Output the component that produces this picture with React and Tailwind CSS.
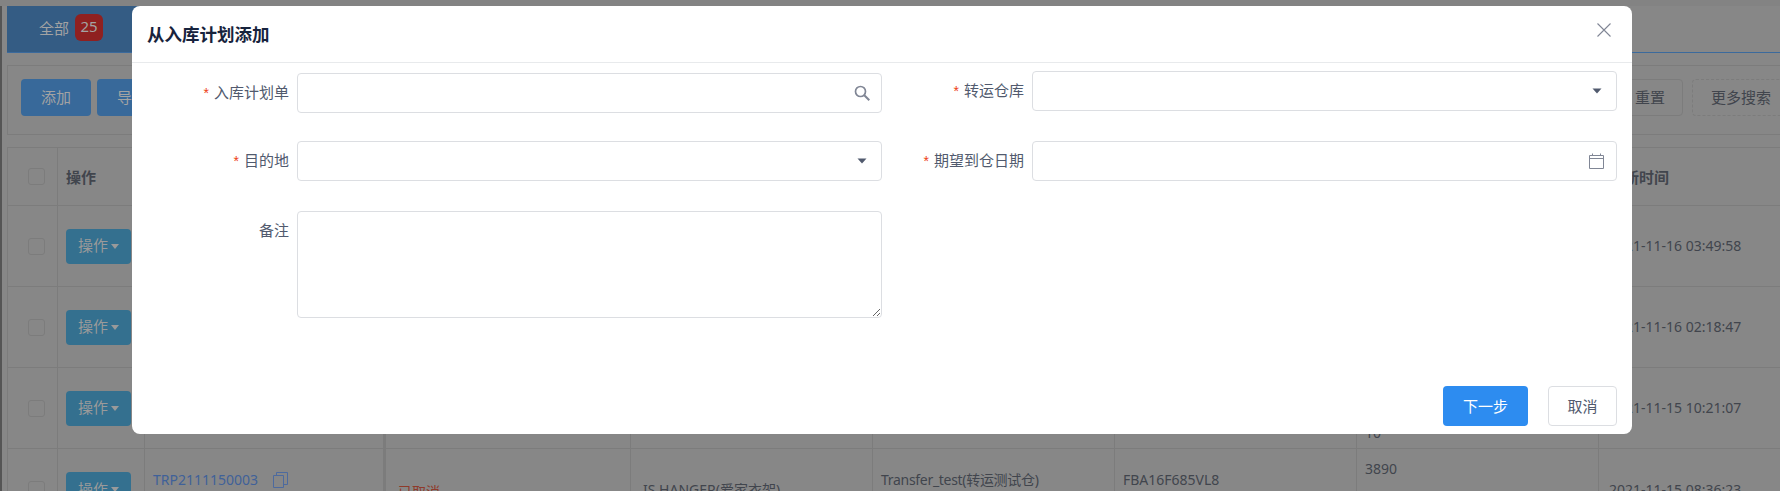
import { RotateCcw } from "lucide-react";

const font = { fontFamily: '"Noto Sans", "Noto Sans CJK SC", sans-serif' };

const Caret = () => (
  <svg width="10" height="6" viewBox="0 0 10 6" className="absolute right-[15px] top-1/2 -translate-y-1/2">
    <path d="M0.5 0.5h9L5 5.5z" fill="#515a6e" />
  </svg>
);

const Field = ({ label, required, labelWidth, top, children }) => (
  <div className="flex gap-2 text-[15px] text-[#515a6e]" style={{ marginTop: top }}>
    <label className="shrink-0 text-right leading-[38px]" style={{ width: labelWidth }}>
      {required && <span className="mr-[5px] font-['Liberation_Sans'] text-sm text-[#ed4014]">*</span>}
      {label}
    </label>
    {children}
  </div>
);

const Box = ({ width, children }) => (
  <div className="relative h-10" style={{ width }}>
    <input className="h-10 w-full rounded-[4px] border border-[#dcdee2] bg-white px-[7px] outline-none" />
    {children}
  </div>
);

const Dialog = () => (
  <div className="absolute left-[132px] top-[6px] z-10 flex h-[428px] w-[1500px] flex-col rounded-lg bg-white">
    <div className="flex h-[57px] shrink-0 items-center justify-between border-b border-[#e8eaec] pl-[15px] pr-[19px]">
      <h2 className="text-[17.5px] font-bold leading-6 text-[#17233d]">从入库计划添加</h2>
      <svg width="16" height="16" viewBox="0 0 16 16" className="-mt-[8px] mr-[1px]" fill="none" stroke="#808695" strokeWidth="1.1">
        <path d="M1.5 1.5l13 13M14.5 1.5l-13 13" />
      </svg>
    </div>
    <div className="flex">
      <div className="flex w-[750px] flex-col">
        <Field label="入库计划单" required labelWidth={157} top={10}>
          <Box width={585}>
            <svg width="18" height="18" viewBox="0 0 18 18" fill="none" stroke="#808695" strokeWidth="1.7" className="absolute right-[11px] top-[11px]">
              <circle cx="7.5" cy="7.5" r="5" />
              <path d="M11.3 11.3l5 5" strokeWidth="2" />
            </svg>
          </Box>
        </Field>
        <Field label="目的地" required labelWidth={157} top={28}>
          <Box width={585}>
            <Caret />
          </Box>
        </Field>
        <Field label="备注" labelWidth={157} top={30}>
          <textarea className="h-[107px] w-[585px] rounded-[4px] border border-[#dcdee2] bg-white px-[7px] py-1 outline-none" />
        </Field>
      </div>
      <div className="flex w-[750px] flex-col">
        <Field label="转运仓库" required labelWidth={142} top={8}>
          <Box width={585}>
            <Caret />
          </Box>
        </Field>
        <Field label="期望到仓日期" required labelWidth={142} top={30}>
          <Box width={585}>
            <svg width="17" height="17" viewBox="0 0 17 17" fill="none" stroke="#808695" className="absolute right-[12px] top-[12px]">
              <path d="M1.5 2.5h14v13h-14zM1.5 5.5h14M4.5 0.5v2M12.5 0.5v2" />
            </svg>
          </Box>
        </Field>
      </div>
    </div>
    <div className="mt-auto flex justify-end gap-[20px] pb-2 pr-[15px]">
      <button className="h-10 w-[85px] rounded-[4px] bg-[#2d8cf0] text-[15px] text-white">下一步</button>
      <button className="h-10 w-[69px] rounded-[4px] border border-[#dcdee2] bg-white text-[15px] text-[#515a6e]">取消</button>
    </div>
  </div>
);

const columns = [
  "w-[50px]",
  "w-[87px]",
  "w-[241px]",
  "w-[245px]",
  "w-[242px]",
  "w-[242px]",
  "w-[242px]",
  "w-[242px]",
  "w-[202px]",
];

const Cell = ({ index, className = "", children }) => (
  <div className={`${columns[index]} flex h-full shrink-0 items-center border-r border-[#7c7c7c] pl-[8px] ${className}`}>
    {children}
  </div>
);

const Checkbox = () => <span className="block h-[17px] w-[17px] rounded-[3px] border border-[#7c7c7c]" />;

const CheckCell = () => (
  <Cell index={0} className="justify-center pl-[2px]">
    <Checkbox />
  </Cell>
);

const OpButton = () => (
  <button className="flex h-[35px] w-[65px] shrink-0 items-center justify-center gap-[3px] rounded-[4px] bg-[#34708f] text-[15px] text-[#9a9a9a]">
    操作
    <svg width="8" height="5" viewBox="0 0 8 5">
      <path d="M0 0h8L4 5z" fill="#9a9a9a" />
    </svg>
  </button>
);

const rows = [
  { time: "2021-11-16 03:49:58" },
  { time: "2021-11-16 02:18:47" },
  { time: "2021-11-15 10:21:07", qty: "10" },
];

const Row = ({ time, qty }) => (
  <div className="flex h-[81px] border-b border-[#7c7c7c]">
    <CheckCell />
    <Cell index={1}><OpButton /></Cell>
    <Cell index={2} className="border-r-[3px]" />
    <Cell index={3} />
    <Cell index={4} />
    <Cell index={5} />
    <Cell index={6} />
    <Cell index={7} className="items-end pb-[5px]">{qty}</Cell>
    <Cell index={8} className="pl-[10px]">{time}</Cell>
  </div>
);

const App = () => (
  <div className="relative flex h-[491px] w-full overflow-hidden bg-[#878787]" style={font}>
    <div className="w-[2px] shrink-0 bg-[#555555]" />
    <div className="ml-[5px] w-[1793px] shrink-0 text-sm text-[#41454d]">
      <div className="-ml-[7px] h-[6px] w-[1800px] bg-[#838383]" />
      <div className="flex h-[47px] border-b border-[#3b6a9c]">
        <div className="flex w-[135px] items-center gap-[6px] bg-[#345c84] pl-[32px] text-[15px] text-[#a3a3a3]">
          全部
          <span className="-mt-1 flex h-[27px] w-[28px] items-center justify-center rounded-md bg-[#8f2020]">25</span>
        </div>
      </div>
      <div className="mt-3 flex h-[70px] items-center justify-between border border-[#7c7c7c] pb-[5px] pl-[13px] pr-[7px] text-[15px]">
        <div className="flex gap-[6px]">
          <button className="h-[37px] w-[70px] rounded-[4px] bg-[#38699a] text-[#a3a3a3]">添加</button>
          <button className="h-[37px] w-[70px] rounded-[4px] bg-[#38699a] text-[#a3a3a3]">导入</button>
        </div>
        <div className="flex gap-[9px]">
          <button className="flex h-[37px] w-[94px] items-center justify-end gap-[2px] rounded-[4px] border border-[#7c7c7c] pr-[17px]">
            <RotateCcw size={14} />
            重置
          </button>
          <button className="flex h-[37px] w-[100px] items-center rounded-[4px] border border-dashed border-[#7c7c7c] pl-[18px]">更多搜索</button>
        </div>
      </div>
      <div className="mt-3 border-l border-t border-[#7c7c7c]">
        <div className="flex h-[58px] border-b border-[#7c7c7c] text-[15px] font-bold">
          <CheckCell />
          <Cell index={1} className="pt-[2px]">操作</Cell>
          <Cell index={2} className="border-r-[3px]" />
          <Cell index={3} />
          <Cell index={4} />
          <Cell index={5} />
          <Cell index={6} />
          <Cell index={7} />
          <Cell index={8} className="pl-[10px] pt-[2px]">更新时间</Cell>
        </div>
        {rows.map((row) => (
          <Row key={row.time} {...row} />
        ))}
        <div className="flex h-[81px]">
          <CheckCell />
          <Cell index={1}><OpButton /></Cell>
          <Cell index={2} className="gap-[15px] border-r-[3px] pb-[19px] text-[#3f6199]">
            TRP2111150003
            <svg width="15" height="16" viewBox="0 0 15 16" fill="none" stroke="#4d6a9e">
              <path d="M0.5 3.5h10v12h-10zM3.5 3.5v-3h11v12h-4" />
            </svg>
          </Cell>
          <Cell index={3} className="pl-[12px] pt-[4px] text-[#8f3a2a]">已取消</Cell>
          <Cell index={4} className="pl-[12px]">IS HANGER(爱家衣架)</Cell>
          <Cell index={5} className="pb-[19px] tracking-[-0.3px]">Transfer_test(转运测试仓)</Cell>
          <Cell index={6} className="pb-[19px]">FBA16F685VL8</Cell>
          <Cell index={7} className="items-start pt-[10px]">3890</Cell>
          <Cell index={8} className="pl-[10px]">2021-11-15 08:36:23</Cell>
        </div>
      </div>
    </div>
    <Dialog />
  </div>
);

export default App;
